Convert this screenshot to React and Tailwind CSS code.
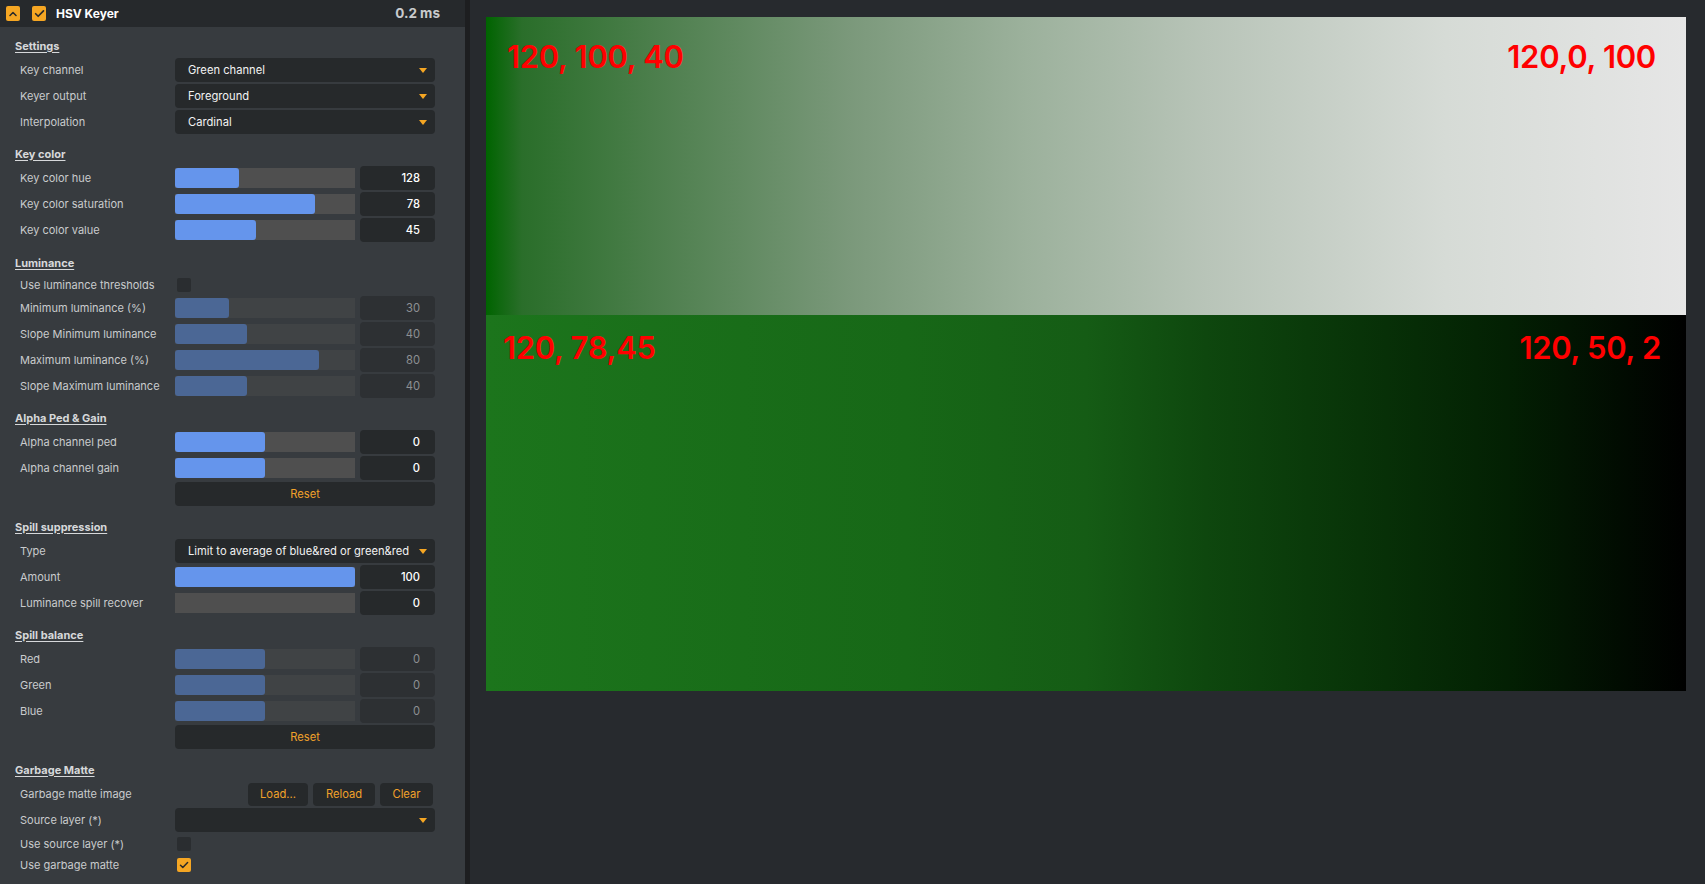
import React from 'react';

const ORANGE = '#f5a623';

const Caret = () => (
  <svg width="8" height="5" viewBox="0 0 8 5" className="shrink-0">
    <path d="M0 0h8L4 5z" fill={ORANGE} />
  </svg>
);

const Check = ({ size = 10 }) => (
  <svg width={size} height={size} viewBox="0 0 10 10">
    <path d="M1.5 5.2l2.3 2.3L8.6 2.6" fill="none" stroke="#2a2a2a" strokeWidth="1.5" strokeLinecap="round" strokeLinejoin="round" />
  </svg>
);

const Section = ({ title, className, children }) => (
  <div className={className}>
    <div className="h-[14px] pl-[15px] flex items-center text-[11px] font-bold text-[#d6d8da] underline underline-offset-2 leading-none">
      {title}
    </div>
    <div className="mt-[5px] flex flex-col gap-[2px]">{children}</div>
  </div>
);

const Row = ({ label, h = 'h-[24px]', children }) => (
  <div className={`flex items-center ${h}`}>
    <div className="w-[175px] shrink-0 pl-[20px] text-[11px] leading-[14px] text-[#c9cbcd] whitespace-nowrap">{label}</div>
    <div className="w-[260px] h-full flex items-center">{children}</div>
  </div>
);

const Dropdown = ({ value }) => (
  <div className="w-full h-full rounded-[4px] bg-[#26292b] flex items-center justify-between pl-[13px] pr-[8px]">
    <span className="text-[11.2px] leading-[14px] text-[#f2f2f2] whitespace-nowrap">{value}</span>
    <Caret />
  </div>
);

const Slider = ({ value, pct, disabled }) => (
  <div className="w-full h-full flex items-center gap-[5px]">
    <div className={`w-[180px] h-[20px] ${disabled ? 'bg-[#404345]' : 'bg-[#4f4f4f]'}`}>
      <div
        className={`h-full rounded-[3px] ${disabled ? 'bg-[#4b6795]' : 'bg-[#6595ec]'}`}
        style={{ width: `${pct}%` }}
      />
    </div>
    <div
      className={`flex-1 h-full rounded-[4px] flex items-center justify-end pr-[15px] text-[11.2px] leading-[14px] ${
        disabled ? 'bg-[#2d3033] text-[#8d9093]' : 'bg-[#26292b] text-white font-medium'
      }`}
    >
      {value}
    </div>
  </div>
);

const Button = ({ children, className = 'w-full' }) => (
  <div className={`${className} h-full rounded-[4px] bg-[#26292b] flex items-center justify-center text-[11.2px] leading-[14px] text-[#f0a12a]`}>
    {children}
  </div>
);

const Checkbox = ({ checked }) => (
  <div
    className={`ml-[2px] w-[14px] h-[14px] rounded-[2px] flex items-center justify-center ${
      checked ? 'bg-[#f5a623]' : 'bg-[#2a2d30]'
    }`}
  >
    {checked && <Check />}
  </div>
);

const Panel = () => (
  <div className="w-[465px] shrink-0 h-full bg-[#373b3f] flex flex-col">
    <div className="h-[27px] bg-[#26292c] flex items-center pl-[6px] pr-[25px]">
      <div className="w-[14px] h-[15px] rounded-[2px] bg-[#f5a623] flex items-center justify-center">
        <svg width="8" height="6" viewBox="0 0 8 6">
          <path d="M1 4.5L4 1.5l3 3" fill="none" stroke="#2a2a2a" strokeWidth="1.5" strokeLinecap="round" strokeLinejoin="round" />
        </svg>
      </div>
      <div className="ml-[12px] w-[14px] h-[15px] rounded-[2px] bg-[#f5a623] flex items-center justify-center">
        <Check size={11} />
      </div>
      <span className="ml-[10px] text-[12px] font-bold text-white">HSV Keyer</span>
      <span className="ml-auto text-[13.5px] font-bold text-[#c9cbcd]">0.2 ms</span>
    </div>

    <Section title="Settings" className="mt-[12px]">
      <Row label="Key channel"><Dropdown value="Green channel" /></Row>
      <Row label="Keyer output"><Dropdown value="Foreground" /></Row>
      <Row label="Interpolation"><Dropdown value="Cardinal" /></Row>
    </Section>

    <Section title="Key color" className="mt-[13px]">
      <Row label="Key color hue"><Slider value="128" pct={35.5} /></Row>
      <Row label="Key color saturation"><Slider value="78" pct={78} /></Row>
      <Row label="Key color value"><Slider value="45" pct={45} /></Row>
    </Section>

    <Section title="Luminance" className="mt-[14px]">
      <Row label="Use luminance thresholds" h="h-[19px]"><Checkbox /></Row>
      <Row label="Minimum luminance (%)"><Slider value="30" pct={30} disabled /></Row>
      <Row label="Slope Minimum luminance"><Slider value="40" pct={40} disabled /></Row>
      <Row label="Maximum luminance (%)"><Slider value="80" pct={80} disabled /></Row>
      <Row label="Slope Maximum luminance"><Slider value="40" pct={40} disabled /></Row>
    </Section>

    <Section title="Alpha Ped &amp; Gain" className="mt-[13px]">
      <Row label="Alpha channel ped"><Slider value="0" pct={50} /></Row>
      <Row label="Alpha channel gain"><Slider value="0" pct={50} /></Row>
      <Row label=""><Button>Reset</Button></Row>
    </Section>

    <Section title="Spill suppression" className="mt-[14px]">
      <Row label="Type"><Dropdown value="Limit to average of blue&red or green&red" /></Row>
      <Row label="Amount"><Slider value="100" pct={100} /></Row>
      <Row label="Luminance spill recover"><Slider value="0" pct={0} /></Row>
    </Section>

    <Section title="Spill balance" className="mt-[13px]">
      <Row label="Red"><Slider value="0" pct={50} disabled /></Row>
      <Row label="Green"><Slider value="0" pct={50} disabled /></Row>
      <Row label="Blue"><Slider value="0" pct={50} disabled /></Row>
      <Row label=""><Button>Reset</Button></Row>
    </Section>

    <Section title="Garbage Matte" className="mt-[14px]">
      <Row label="Garbage matte image">
        <div className="w-full h-[23px] flex justify-end gap-[5px] pr-[2px]">
          <Button className="w-[60px]">Load...</Button>
          <Button className="w-[62px]">Reload</Button>
          <Button className="w-[53px]">Clear</Button>
        </div>
      </Row>
      <Row label="Source layer (*)"><Dropdown value="" /></Row>
      <Row label="Use source layer (*)" h="h-[19px]"><Checkbox /></Row>
      <Row label="Use garbage matte" h="h-[19px]"><Checkbox checked /></Row>
    </Section>
  </div>
);

const Label = ({ children }) => (
  <span className="text-[31px] font-semibold text-[#ff0000] leading-none tracking-[-0.3px]">{children}</span>
);

const Viewer = () => (
  <div className="flex-1 h-full bg-[#272a2e] pt-[17px] pl-[16px]">
    <div className="w-[1200px] flex flex-col">
      <div className="h-[298px] bg-[linear-gradient(to_right,#006400_0%,#2a6e2a_3%,#4f804f_15%,#7a987a_30%,#9cb19c_45%,#b8c4b8_60%,#d6dbd6_80%,#e6e6e6_100%)] flex justify-between items-start pt-[24px] pl-[21px] pr-[30px]">
        <Label>120, 100, 40</Label>
        <Label>120,0, 100</Label>
      </div>
      <div className="h-[376px] bg-[linear-gradient(to_right,#1c751c_0%,#176817_35%,#155c15_50%,#0e470e_60%,#073007_75%,#032003_85%,#000000_100%)] flex justify-between items-start pt-[17px] pl-[17px] pr-[25px]">
        <Label>120, 78,45</Label>
        <Label>120, 50, 2</Label>
      </div>
    </div>
  </div>
);

export default function App() {
  return (
    <div className="w-[1705px] h-[884px] flex overflow-hidden font-['Inter',sans-serif]">
      <Panel />
      <div className="w-[5px] h-full bg-[#1d1e20]" />
      <Viewer />
    </div>
  );
}
